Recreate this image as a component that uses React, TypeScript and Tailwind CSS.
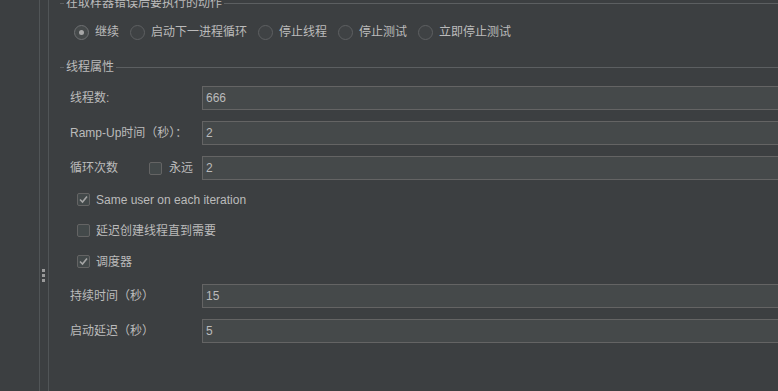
import React from "react";

const actions = ["继续", "启动下一进程循环", "停止线程", "停止测试", "立即停止测试"];

const Titled = ({ label, className }: { label: string; className: string }) => (
  <div className={`flex items-center h-[14px] ${className}`}>
    <div className="ml-[11px] w-[4px] h-px bg-[#5c5f61]" />
    <span className="px-[2px] leading-none whitespace-nowrap">{label}</span>
    <div className="flex-1 h-px bg-[#5c5f61]" />
  </div>
);

const Radio = ({ checked }: { checked?: boolean }) => (
  <div
    className={
      checked
        ? "size-[15px] rounded-full border border-[#6e7072] bg-[#45494a] flex items-center justify-center"
        : "size-[15px] rounded-full border border-[#5e6062] bg-[#3f4244]"
    }
  >
    {checked && <div className="size-[5px] rounded-full bg-[#a7a7a7]" />}
  </div>
);

const Check = ({ checked }: { checked?: boolean }) => (
  <div className="size-[13px] shrink-0 rounded-[2px] border border-[#646464] bg-[#43494a] flex items-center justify-center">
    {checked && (
      <svg width="11" height="11" viewBox="0 0 11 11">
        <polyline points="2,5.5 4.5,8 9,2.5" fill="none" stroke="#a5a5a5" strokeWidth="1.6" />
      </svg>
    )}
  </div>
);

const Field = ({ value }: { value: string }) => (
  <div className="flex-1 h-[24px] border border-[#646464] bg-[#45494a] pl-[3px] flex items-center">
    {value}
  </div>
);

const Row = ({ label, value, className }: { label: string; value: string; className: string }) => (
  <div className={`flex items-center pl-[21px] ${className}`}>
    <div className="w-[132px] shrink-0 whitespace-nowrap">{label}</div>
    <Field value={value} />
  </div>
);

const CheckRow = ({ label, checked }: { label: string; checked?: boolean }) => (
  <div className="h-[31px] pl-[28px] flex items-center gap-[6px]">
    <Check checked={checked} />
    <span>{label}</span>
  </div>
);

export default function App() {
  return (
    <div className="w-[778px] h-[391px] overflow-hidden flex bg-[#3c3f41] text-[#bbbbbb] text-[12px] font-['Liberation_Sans','Noto_Sans_CJK_SC',sans-serif]">
      <div className="w-[39px] shrink-0" />
      <div className="w-[10px] shrink-0 border-x border-[#515557] pt-[269px] pl-[2px] flex flex-col gap-[2px]">
        <div className="size-[3px] bg-[#9a9a9a]" />
        <div className="size-[3px] bg-[#9a9a9a]" />
        <div className="size-[3px] bg-[#9a9a9a]" />
      </div>
      <div className="w-[800px] shrink-0 flex flex-col">
        <Titled label="在取样器错误后要执行的动作" className="-mt-[4px]" />
        <div className="mt-[14px] h-[16px] pl-[25px] flex items-center">
          {actions.map((a, i) => (
            <div key={a} className="flex items-center gap-[6px] mr-[11px]">
              <Radio checked={i === 0} />
              <span className="whitespace-nowrap">{a}</span>
            </div>
          ))}
        </div>
        <Titled label="线程属性" className="mt-[20px]" />
        <Row label="线程数:" value="666" className="mt-[12px]" />
        <Row label="Ramp-Up时间（秒）：" value="2" className="mt-[11px]" />
        <div className="mt-[11px] flex items-center pl-[21px]">
          <div className="w-[79px] shrink-0">循环次数</div>
          <div className="w-[53px] shrink-0 flex items-center gap-[7px]">
            <Check />
            <span>永远</span>
          </div>
          <Field value="2" />
        </div>
        <div className="mt-[4px]">
          <CheckRow label="Same user on each iteration" checked />
          <CheckRow label="延迟创建线程直到需要" />
          <CheckRow label="调度器" checked />
        </div>
        <Row label="持续时间（秒）" value="15" className="mt-[7px]" />
        <Row label="启动延迟（秒）" value="5" className="mt-[11px]" />
      </div>
    </div>
  );
}
